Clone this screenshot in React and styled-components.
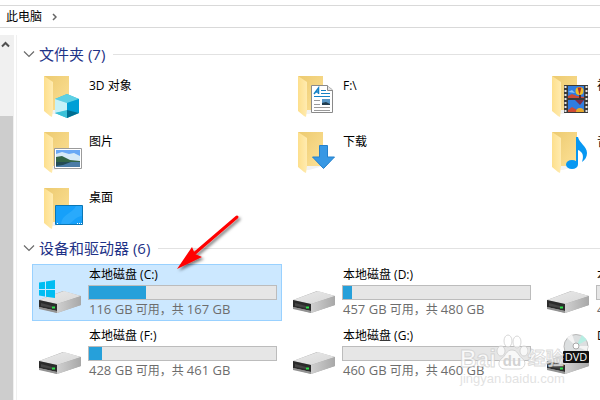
import React from 'react';
import styled, { createGlobalStyle } from 'styled-components';

const GlobalStyle = createGlobalStyle`
  * {
    box-sizing: border-box;
  }
  body {
    margin: 0;
    background-color: #fff;
    color: #000;
    font-family: 'Open Sans', 'Noto Sans CJK SC', sans-serif;
    font-size: 12px;
    line-height: 16px;
  }
`;

const Window = styled.div`
  position: relative;
  display: flex;
  flex-direction: column;
  height: 100vh;
  overflow: hidden;
`;

const AddressBar = styled.nav`
  display: flex;
  align-items: center;
  gap: 10px;
  height: 23px;
  margin-top: 5px;
  padding: 0 6px;
  border-top: 1px solid #d9d9d9;
  border-bottom: 1px solid #d9d9d9;
`;
const Crumb = styled.a`
  color: #000;
  text-decoration: none;
`;

const Body = styled.div`
  display: flex;
  flex: 1;
  min-height: 0;
  padding-top: 7px;
`;

const ScrollBar = styled.div`
  display: flex;
  flex-direction: column;
  width: 14px;
  padding-right: 1px;
  background-color: #f0f0f0;
`;
const ScrollButton = styled.button`
  height: 81px;
  padding: 6px 0 0 1px;
  border: none;
  background-color: transparent;
  display: flex;
  align-items: flex-start;
`;
const Thumb = styled.div`
  flex: 1;
  background-color: #cdcdcd;
`;

const Content = styled.main`
  flex: 1;
  min-width: 0;
  margin-left: 2px;
  padding: 8px 0 0 6px;
  border-left: 1px solid #f0f0f0;
  overflow: hidden;
`;

const GroupHeader = styled.div`
  display: flex;
  align-items: center;
  gap: 4px;
  height: 22px;
`;
const Toggle = styled.button`
  display: flex;
  width: 12px;
  padding: 0;
  border: none;
  background-color: transparent;
`;
const GroupTitle = styled.h2`
  margin: 0;
  color: #1e3287;
  font-size: 15px;
  font-weight: 400;
  line-height: 22px;
`;
const Rule = styled.hr`
  flex: 1;
  height: 1px;
  margin: 0 0 0 4px;
  border: none;
  background-color: #e2e2e2;
`;

const Grid = styled.div`
  display: grid;
  grid-template-columns: repeat(3, 250px);
  column-gap: 4px;
  row-gap: ${(props) => props.$gap};
  padding: ${(props) => props.$top} 0 0 9px;
`;

const FolderTile = styled.div`
  display: flex;
  gap: 5px;
  height: 56px;
  padding: 7px 0 0 12px;
`;
const FolderName = styled.span`
  padding-top: 2px;
  white-space: nowrap;
`;

const DriveTile = styled.div`
  display: flex;
  gap: 5px;
  height: 57px;
  padding: 0 4px 0 5px;
  border: 1px solid ${(props) => (props.$selected ? '#99d1ff' : 'transparent')};
  background-color: ${(props) => (props.$selected ? '#cce8ff' : 'transparent')};
`;
const DriveInfo = styled.div`
  flex: 1;
  padding-top: 2px;
  white-space: nowrap;
`;
const DriveName = styled.div`
  padding-left: 1px;
`;
const Bar = styled.div`
  height: 15px;
  margin: 2px 0 1px;
  border: 1px solid #bcbcbc;
  background-color: #e6e6e6;
`;
const Used = styled.div`
  height: 100%;
  background-color: #26a0da;
`;
const DriveSpace = styled.div`
  padding-left: 1px;
  color: #6d6d6d;
`;
const Size = styled.span`
  font-size: 13px;
`;

const Arrow = styled.svg`
  position: absolute;
  left: 170px;
  top: 208px;
`;

const Watermark = styled.div`
  position: absolute;
  left: 460px;
  top: 334px;
  color: rgba(255, 255, 255, 0.8);
  font-family: 'Liberation Sans', 'Noto Sans CJK SC', sans-serif;
  font-weight: 700;
  white-space: nowrap;
  pointer-events: none;
`;
const Brand = styled.div`
  display: flex;
  align-items: flex-end;
  height: 36px;
  font-size: 23px;
  line-height: 22px;
  -webkit-text-stroke: 1px rgba(195, 195, 195, 0.6);
`;
const BrandSuffix = styled.span`
  font-size: 18px;
`;
const Site = styled.div`
  padding-top: 2px;
  color: rgba(222, 222, 222, 0.9);
  font-size: 13px;
  font-weight: 400;
  line-height: 14px;
`;

const Chevron = () => (
  <svg width="12" height="8" fill="none" stroke="#6b6b6b">
    <path d="M1 1.5 6 6.5 11 1.5" strokeWidth="1.2" />
  </svg>
);

const Paw = () => (
  <svg width="32" height="36" fill="rgba(255,255,255,.7)" stroke="rgba(205,205,205,.8)">
    <ellipse cx="5" cy="17" rx="4" ry="5" />
    <ellipse cx="12" cy="7" rx="4" ry="6" />
    <ellipse cx="21" cy="8" rx="4" ry="6" />
    <ellipse cx="28" cy="17" rx="4" ry="5" />
    <path d="M16 16C22 16 22 22 27 25C31 29 28 35 23 35H9C3 35 1 29 5 25C10 22 10 16 16 16Z" />
    <text x="16" y="32" fill="#d2d2d2" stroke="none" fontSize="15" textAnchor="middle">
      du
    </text>
  </svg>
);

const overlays = {
  cube: (
    <g>
      <path d="M11 23 23 18 35 23V37L23 42 11 37Z" fill="#35b9d6" />
      <path d="M11 23 23 18 35 23 23 27Z" fill="#5dd0e4" />
      <path d="M11 23 23 27V35L11 37Z" fill="#c5f1f8" />
      <path d="M23 27 35 23V37L23 35Z" fill="#009fd6" />
      <path d="M11 37 23 34V42Z" fill="#3bc1d8" />
      <path d="M23 34 35 37 23 42Z" fill="#006e91" />
    </g>
  ),
  document: (
    <g>
      <path d="M13.500 9.500H29L34.500 14V36.500H13.500Z" fill="#fff" stroke="#8a8a8a" />
      <path d="M29.500 9.500V14.500H34.500" fill="#e4e4e4" stroke="#8a8a8a" />
      <path d="M16 18 20.500 12V18M18 16H21" fill="none" stroke="#1681c4" strokeWidth="1.500" />
      <path d="M23 14.500H28M23 17.500H32M16 20.500H32" stroke="#1681c4" />
      <path d="M16 24.500H22M16 28.500H22M16 31.500H32M16 34.500H32" stroke="#9a9a9a" />
      <path d="M24 23H32V29H24Z" fill="#5795c4" />
      <path d="M24 27 28 26 32 28V29H24Z" fill="#203c4f" />
    </g>
  ),
  film: (
    <g>
      <path d="M12 9H36V37H12Z" fill="#3a3a3a" />
      <path d="M13.500 10V37M34.500 10V37" stroke="#e6e6e6" strokeWidth="2" strokeDasharray="2 2" />
      <path d="M16 10H32V22H16ZM16 24H32V36H16Z" fill="#2f7de1" />
      <path d="M16 20 20 18 25 20 32 21V22H16ZM16 34 20 31 25 34V36H16Z" fill="#cf4b35" />
      <path d="M16 16 20 14 23 17Z" fill="#8bc2f5" />
      <circle cx="27.500" cy="15" r="4" fill="#f0bd28" />
      <path d="M25.500 11.500 27.500 19 29.500 11.500Z" fill="#a92e2a" />
      <path d="M27 19H29V22H27Z" fill="#5c2b20" />
      <path d="M23 24H32L28 29Z" fill="#7b2d4a" />
      <path d="M24 36A4 4 0 0 1 32 36Z" fill="#e9a92b" />
    </g>
  ),
  picture: (
    <g>
      <path d="M10.500 16.500H37.500V36.500H10.500Z" fill="#fff" stroke="#9b9b9b" />
      <path d="M12 18H36V35H12Z" fill="#69a8f5" />
      <path d="M12 22 18 20 25 22 30 21 36 24V30H12Z" fill="#d5e9f8" />
      <path d="M12 25 18 24 26 28 36 29V31H12Z" fill="#326547" />
      <path d="M12 30H36V35H12Z" fill="#4a7ca7" />
      <path d="M12 30H27L19 33 12 34Z" fill="#234c55" />
    </g>
  ),
  download: (
    <path d="M21.500 13.500H29.500V25H36.500L25.500 36.500 14.500 25H21.500Z" fill="#3898e4" stroke="#2380cc" />
  ),
  music: (
    <g fill="#0797f2">
      <ellipse cx="20" cy="32.500" rx="6" ry="4.500" />
      <path d="M24 5H26C27 11 35 14 35 21C35 25 33 28 30 30C32 24 31 20 26 18V32H24Z" />
    </g>
  ),
  desktop: (
    <g>
      <path d="M11.500 17.500H38.500V36.500H11.500Z" fill="#16a0fa" stroke="#0a76b5" />
      <path d="M17 36C18 26 28 26 32 18H38V28C31 29 30 33 25 36Z" fill="#37b0fd" opacity=".6" />
      <path d="M13 35.500H14M33 35.500H38" stroke="#fff" strokeDasharray="1 1" />
    </g>
  ),
};

const FolderIcon = ({ kind }) => (
  <svg width="40" height="44" viewBox="0 0 40 44">
    <defs>
      <linearGradient id="back" x1="0" y1="0" x2="1" y2="1">
        <stop offset="0" stopColor="#ecca70" />
        <stop offset="1" stopColor="#fde196" />
      </linearGradient>
      <linearGradient id="front" x1="0" y1="0" x2="1" y2="0">
        <stop offset="0" stopColor="#fddf8c" />
        <stop offset="1" stopColor="#ffebb0" />
      </linearGradient>
    </defs>
    <path d="M0 0H25V34H9Z" fill="url(#back)" />
    <path d="M8 34H25L11 38H8Z" fill="#f2f2f2" />
    <path d="M0 0 9 6V34L8 41 6 40 0 35Z" fill="url(#front)" />
    {overlays[kind]}
  </svg>
);

const DriveIcon = ({ kind }) => (
  <svg width="45" height="54" viewBox="0 0 45 54">
    <defs>
      <linearGradient id="side" x1="0" y1="0" x2="1" y2="0">
        <stop offset="0" stopColor="#d0d0d0" />
        <stop offset="1" stopColor="#a8a8a8" />
      </linearGradient>
      <linearGradient id="top" x1="0" y1="0" x2="1" y2="1">
        <stop offset="0" stopColor="#e9e9e9" />
        <stop offset="1" stopColor="#d8d8d8" />
      </linearGradient>
    </defs>
    <path d="M1 35 25 26 43 31V40L19 48 1 43Z" fill="#aaa" />
    <path d="M1 35 26 26 43 31 19 39Z" fill="url(#top)" />
    <path d="M19 39 43 31V40L19 48Z" fill="url(#side)" />
    <path d="M1 35 19 39V46L1 42Z" fill="#2b2b2b" />
    <path d="M1 42 19 46V48L1 44Z" fill="#929292" />
    <path d="M3 38 14 41V43L3 41Z" fill="#454545" />
    <path d="M14 42.500H17" stroke="#2fe04c" strokeWidth="2" />
    {kind === 'windows' && (
      <path d="M1 17.500 7 16.700V24H1ZM8 16.500 17 15V24H8ZM1 25H7V31.500L1 30.500ZM8 25H17V33L8 31.700Z" fill="#00bdf2" />
    )}
    {kind === 'dvd' && (
      <g>
        <circle cx="30" cy="20.500" r="12" fill="#dcdfe0" stroke="#b8b8b8" />
        <path d="M30 20 36 9 41 14Z" fill="#b7eee3" />
        <path d="M30 20 21 12 26 8ZM30 20 42 20 41 25Z" fill="#f4f4f4" />
        <circle cx="30" cy="20" r="3" fill="#fff" stroke="#aaa" />
        <rect x="17" y="25" width="26" height="12" rx="1" fill="#111" />
        <text x="30" y="35" fill="#fff" fontSize="11" textAnchor="middle">
          DVD
        </text>
      </g>
    )}
  </svg>
);

const folders = [
  { name: '3D 对象', kind: 'cube' },
  { name: 'F:\\', kind: 'document' },
  { name: '视频', kind: 'film' },
  { name: '图片', kind: 'picture' },
  { name: '下载', kind: 'download' },
  { name: '音乐', kind: 'music' },
  { name: '桌面', kind: 'desktop' },
];

const drives = [
  { name: '本地磁盘 (C:)', free: 116, total: 167, kind: 'windows' },
  { name: '本地磁盘 (D:)', free: 457, total: 480 },
  { name: '本地磁盘 (E:)', free: 461, total: 461 },
  { name: '本地磁盘 (F:)', free: 428, total: 461 },
  { name: '本地磁盘 (G:)', free: 460, total: 460 },
  { name: 'DVD 驱动器 (H:)', kind: 'dvd' },
];

const Group = ({ title, children }) => (
  <section>
    <GroupHeader>
      <Toggle aria-label={title}>
        <Chevron />
      </Toggle>
      <GroupTitle>{title}</GroupTitle>
      <Rule />
    </GroupHeader>
    {children}
  </section>
);

const Drive = ({ drive, selected }) => (
  <DriveTile $selected={selected}>
    <DriveIcon kind={drive.kind} />
    <DriveInfo>
      <DriveName>{drive.name}</DriveName>
      {drive.total && (
        <>
          <Bar>
            <Used style={{ width: `${(1 - drive.free / drive.total) * 100}%` }} />
          </Bar>
          <DriveSpace>
            <Size>{`${drive.free} GB`}</Size> 可用，共 <Size>{`${drive.total} GB`}</Size>
          </DriveSpace>
        </>
      )}
    </DriveInfo>
  </DriveTile>
);

const App = () => {
  return (
    <Window>
      <GlobalStyle />
      <AddressBar>
        <Crumb href="#">此电脑</Crumb>
        <svg width="5" height="8" fill="none" stroke="#666" strokeWidth="1.5">
          <path d="M1 1 4 4 1 7" />
        </svg>
      </AddressBar>
      <Body>
        <ScrollBar>
          <ScrollButton aria-label="Scroll up">
            <svg width="9" height="7" fill="none" stroke="#505050" strokeWidth="2">
              <path d="M1 5.500 4.500 2 8 5.500" />
            </svg>
          </ScrollButton>
          <Thumb />
        </ScrollBar>
        <Content>
          <Group title="文件夹 (7)">
            <Grid $gap="0" $top="4px">
              {folders.map((folder) => (
                <FolderTile key={folder.name}>
                  <FolderIcon kind={folder.kind} />
                  <FolderName>{folder.name}</FolderName>
                </FolderTile>
              ))}
            </Grid>
          </Group>
          <Group title="设备和驱动器 (6)">
            <Grid $gap="4px" $top="5px">
              {drives.map((drive, index) => (
                <Drive key={drive.name} drive={drive} selected={index === 0} />
              ))}
            </Grid>
          </Group>
        </Content>
      </Body>
      <Arrow width="74" height="66" viewBox="0 0 74 66">
        <defs>
          <filter id="shadow" x="-20%" y="-20%" width="150%" height="150%">
            <feDropShadow dx="2" dy="2" stdDeviation="1.500" floodOpacity=".5" />
          </filter>
        </defs>
        <g filter="url(#shadow)">
          <path d="M67 9 25 45" stroke="#f00" strokeWidth="3" strokeLinecap="round" />
          <path d="M7 61 22 39 25 46 32 49Z" fill="#f00" />
        </g>
      </Arrow>
      <Watermark>
        <Brand>
          Bai
          <Paw />
          <BrandSuffix>经验</BrandSuffix>
        </Brand>
        <Site>jingyan.baidu.com</Site>
      </Watermark>
    </Window>
  );
};

export default App;
